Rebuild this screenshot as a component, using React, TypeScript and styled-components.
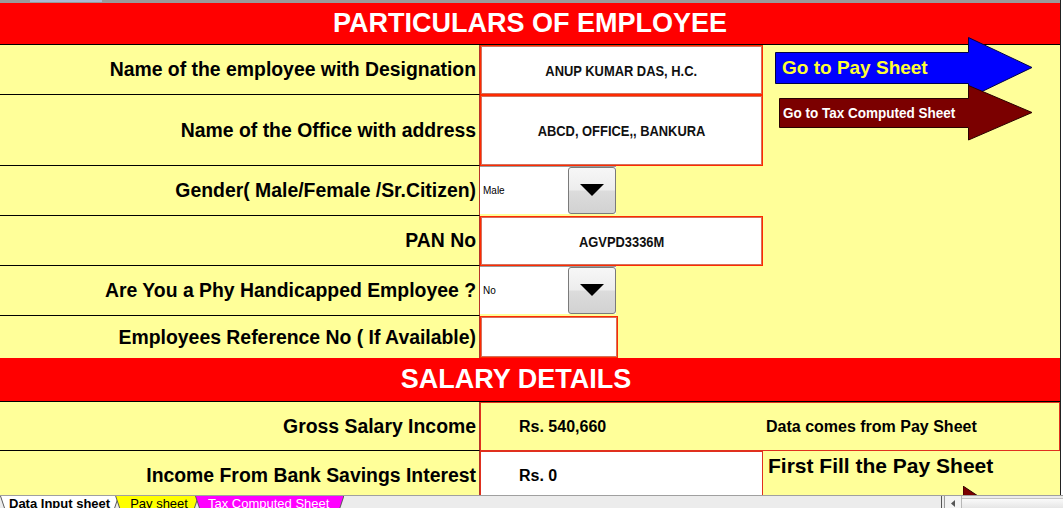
import React from 'react';
import styled, { createGlobalStyle } from 'styled-components';

// global reset
const GlobalStyle = createGlobalStyle`
  html, body {
    margin: 0;
    padding: 0;
    background: #fff;
  }
  body {
    font-family: "Liberation Sans", Arial, sans-serif;
    overflow: hidden;
  }
  * {
    box-sizing: border-box;
  }
`;

const Screen = styled.div`
  height: 100vh;
  display: flex;
  flex-direction: column;
  overflow: hidden;
`;

const Sheet = styled.div`
  flex: 1;
  min-height: 0;
  overflow: hidden;
  width: 1061px;
  background: #ffff99;
  border-right: 1px solid #222;
`;

const TopStrip = styled.div`
  height: 3px;
  padding-left: 30px;
  background: #9a9a9a;
`;

const SelectedColumn = styled.div`
  width: 72px;
  height: 2px;
  background: #aabbd6;
`;

const SectionHeader = styled.div<{ $height: number; $shift?: number }>`
  height: ${({ $height }) => $height}px;
  padding-right: ${({ $shift }) => $shift ?? 0}px;
  background: #ff0000;
  border-bottom: 1px solid #000;
  display: flex;
  align-items: center;
  justify-content: center;
  color: #fff;
  font: bold 27px "Liberation Sans", Arial, sans-serif;
`;

const Grid = styled.div<{ $rows: string }>`
  display: grid;
  grid-template-columns: 480px 283px 1fr;
  grid-template-rows: ${({ $rows }) => $rows};
`;

const Label = styled.div<{ $last?: boolean }>`
  grid-column: 1;
  display: flex;
  align-items: center;
  justify-content: flex-end;
  padding-right: 3px;
  border-right: 1px solid #b5332a;
  border-bottom: ${({ $last }) => ($last ? 'none' : '1px solid #000')};
  font: bold 19.4px "Liberation Sans", Arial, sans-serif;
  color: #000;
  white-space: nowrap;
`;

const FieldSlot = styled.div`
  grid-column: 2;
  display: flex;
  min-width: 0;
`;

const TextCell = styled.div<{ $width?: number }>`
  width: ${({ $width }) => ($width ? `${$width}px` : '100%')};
  height: 100%;
  background: #fff;
  border: 1px solid #ff2a00;
  box-shadow: inset 0 0 0 1px #d4705c;
  display: flex;
  align-items: center;
  justify-content: center;
  font: bold 15px "Liberation Sans", Arial, sans-serif;
  color: #111;
`;

// no condensed face is installed, so squeeze the regular one
const Narrow = styled.span<{ $scale: number; $origin?: string }>`
  display: inline-block;
  white-space: nowrap;
  transform: scaleX(${({ $scale }) => $scale});
  transform-origin: ${({ $origin }) => $origin ?? 'center'};
`;

const Select = styled.div`
  display: flex;
  width: 136px;
  height: 48px;
  background: #fff;
  border-top: 1px solid #9a9a9a;
`;

const SelectValue = styled.div`
  flex: 1;
  display: flex;
  align-items: center;
  padding-left: 3px;
  font: 10px "Liberation Sans", Arial, sans-serif;
  color: #000;
`;

const SelectButton = styled.div`
  width: 48px;
  border: 1px solid #7a7a7a;
  border-radius: 3px;
  background: linear-gradient(#f7f7f7 0%, #ededed 48%, #dcdcdc 52%, #d2d2d2 100%);
  display: flex;
  align-items: center;
  justify-content: center;
  padding-bottom: 2px;
`;

const RightPanel = styled.div`
  grid-column: 3;
  grid-row: 1 / -1;
  position: relative;
`;

const ArrowLink = styled.div<{ $left: number; $top: number; $w: number; $h: number }>`
  position: absolute;
  left: ${({ $left }) => $left}px;
  top: ${({ $top }) => $top}px;
  width: ${({ $w }) => $w}px;
  height: ${({ $h }) => $h}px;
  cursor: pointer;

  svg {
    position: absolute;
    inset: 0;
  }
`;

const ArrowCaption = styled.span<{ $left: number; $top: number; $h: number; $color: string; $size: number }>`
  position: absolute;
  left: ${({ $left }) => $left}px;
  top: ${({ $top }) => $top}px;
  height: ${({ $h }) => $h}px;
  display: flex;
  align-items: center;
  white-space: nowrap;
  color: ${({ $color }) => $color};
  font: bold ${({ $size }) => $size}px "Liberation Sans", Arial, sans-serif;
`;

const GrossCell = styled.div`
  grid-column: 2 / 4;
  display: grid;
  grid-template-columns: 282px 1fr;
  align-items: center;
  border: 1px solid #e0301e;
  font: bold 16px "Liberation Sans", Arial, sans-serif;
  color: #000;
`;

const Amount = styled.span`
  padding-left: 38px;
`;

const Remark = styled.span`
  padding-left: 3px;
`;

const ValueCell = styled.div`
  grid-column: 2;
  display: flex;
  align-items: center;
  padding-left: 38px;
  background: #fff;
  border: 1px solid #e0301e;
  font: bold 16px "Liberation Sans", Arial, sans-serif;
  color: #000;
`;

const Notice = styled.div`
  grid-column: 3;
  position: relative;
  padding: 3px 0 0 5px;
  font: bold 21px "Liberation Sans", Arial, sans-serif;
  color: #000;
`;

const PeekArrow = styled.svg`
  position: absolute;
  left: 200px;
  top: 35px;
`;

const TabBar = styled.div`
  flex: none;
  height: 13px;
  display: flex;
  background: #ececec;
  border-top: 1px solid #a0a0a0;
  overflow: hidden;
`;

const Tab = styled.div<{ $first?: boolean }>`
  margin-left: ${({ $first }) => ($first ? 0 : -4)}px;
  padding: 0 1px;
  background: #5a5a5a;
  clip-path: polygon(0 0, 100% 0, calc(100% - 4px) 100%, 4px 100%);
`;

const TabFace = styled.div<{ $bg: string; $fg: string; $active?: boolean; $left: number; $right: number }>`
  height: 100%;
  padding: 0 ${({ $right }) => $right}px 0 ${({ $left }) => $left}px;
  background: ${({ $bg }) => $bg};
  color: ${({ $fg }) => $fg};
  clip-path: polygon(0 0, 100% 0, calc(100% - 4px) 100%, 4px 100%);
  font: ${({ $active }) => ($active ? 'bold' : 'normal')} 13px "Liberation Sans", Arial, sans-serif;
  line-height: 15px;
  white-space: nowrap;
`;

const ScrollArea = styled.div`
  margin-left: auto;
  width: 122px;
  display: flex;
`;

const Splitter = styled.div`
  width: 4px;
  border-left: 1px solid #555;
  border-right: 1px solid #999;
`;

const ScrollButton = styled.div`
  width: 17px;
  display: flex;
  justify-content: center;
  padding-top: 4px;
  background: #f2f2f2;
  border-right: 1px solid #b8b8b8;
`;

const Track = styled.div`
  flex: 1;
  background: linear-gradient(#fafafa, #e6e6e6);
  border-top: 1px solid #c4c4c4;
  margin-top: 2px;
`;

type Row =
  | { label: string; kind: 'text'; value: string; width?: number }
  | { label: string; kind: 'select'; value: string };

const particulars: Row[] = [
  { label: 'Name of the employee with Designation', kind: 'text', value: 'ANUP KUMAR DAS, H.C.' },
  { label: 'Name of the Office with address', kind: 'text', value: 'ABCD, OFFICE,, BANKURA' },
  { label: 'Gender( Male/Female /Sr.Citizen)', kind: 'select', value: 'Male' },
  { label: 'PAN No', kind: 'text', value: 'AGVPD3336M' },
  { label: 'Are You a Phy Handicapped Employee ?', kind: 'select', value: 'No' },
  { label: 'Employees Reference No ( If Available)', kind: 'text', value: '', width: 138 },
];

const DownTriangle = () => (
  <svg width="24" height="12" viewBox="0 0 24 12">
    <polygon points="0,0 24,0 12,12" fill="#000" />
  </svg>
);

const App: React.FC = () => {
  return (
    <>
      <GlobalStyle />
      <Screen>
        <Sheet>
          <TopStrip>
            <SelectedColumn />
          </TopStrip>
          <SectionHeader $height={42}>PARTICULARS OF EMPLOYEE</SectionHeader>

          <Grid $rows="50px 71px 50px 50px 50px 42px">
            <RightPanel>
              <ArrowLink $left={12} $top={-8} $w={258} $h={62}>
                <svg width="258" height="62" viewBox="0 0 258 62">
                  <polygon
                    points="0.5,15.5 193.5,15.5 193.5,0.5 257,30.5 193.5,61 193.5,46.5 0.5,46.5"
                    fill="#0000ff"
                    stroke="#00004a"
                  />
                </svg>
                <ArrowCaption $left={7} $top={15} $h={31} $color="#ffff33" $size={19}>
                  Go to Pay Sheet
                </ArrowCaption>
              </ArrowLink>
              <ArrowLink $left={16} $top={40} $w={254} $h={56}>
                <svg width="254" height="56" viewBox="0 0 254 56">
                  <polygon
                    points="0.5,13.5 189.5,13.5 189.5,0.5 253,27.5 189.5,55 189.5,42.5 0.5,42.5"
                    fill="#7b0000"
                    stroke="#2a0000"
                  />
                </svg>
                <ArrowCaption $left={4} $top={13} $h={29} $color="#fff" $size={15}>
                  <Narrow $scale={0.9} $origin="left">Go to Tax Computed Sheet</Narrow>
                </ArrowCaption>
              </ArrowLink>
            </RightPanel>

            {particulars.map((row, i) => (
              <React.Fragment key={row.label}>
                <Label $last={i === particulars.length - 1}>{row.label}</Label>
                <FieldSlot>
                  {row.kind === 'text' ? (
                    <TextCell $width={row.width}>
                      <Narrow $scale={0.86}>{row.value}</Narrow>
                    </TextCell>
                  ) : (
                    <Select>
                      <SelectValue>{row.value}</SelectValue>
                      <SelectButton>
                        <DownTriangle />
                      </SelectButton>
                    </Select>
                  )}
                </FieldSlot>
              </React.Fragment>
            ))}
          </Grid>

          <SectionHeader $height={44} $shift={28}>SALARY DETAILS</SectionHeader>

          <Grid $rows="49px 50px">
            <Label>Gross Salary Income</Label>
            <GrossCell>
              <Amount>Rs. 540,660</Amount>
              <Remark>Data comes from Pay Sheet</Remark>
            </GrossCell>
            <Label>Income From Bank Savings Interest</Label>
            <ValueCell>Rs. 0</ValueCell>
            <Notice>
              First Fill the Pay Sheet
              <PeekArrow width="60" height="60" viewBox="0 0 60 60">
                <polygon points="0,0 42,28 0,56" fill="#7b0000" stroke="#2a0000" />
              </PeekArrow>
            </Notice>
          </Grid>
        </Sheet>

        <TabBar>
          <Tab $first>
            <TabFace $bg="#fff" $fg="#000" $active $left={8} $right={8}>
              Data Input sheet
            </TabFace>
          </Tab>
          <Tab>
            <TabFace $bg="#ffff00" $fg="#000" $left={14} $right={10}>
              Pay sheet
            </TabFace>
          </Tab>
          <Tab>
            <TabFace $bg="#ff00ff" $fg="#fff" $left={12} $right={14}>
              Tax Computed Sheet
            </TabFace>
          </Tab>
          <ScrollArea>
            <Splitter />
            <ScrollButton>
              <svg width="4" height="7" viewBox="0 0 4 7">
                <polygon points="4,0 0,3.5 4,7" fill="#555" />
              </svg>
            </ScrollButton>
            <Track />
          </ScrollArea>
        </TabBar>
      </Screen>
    </>
  );
};

export default App;
